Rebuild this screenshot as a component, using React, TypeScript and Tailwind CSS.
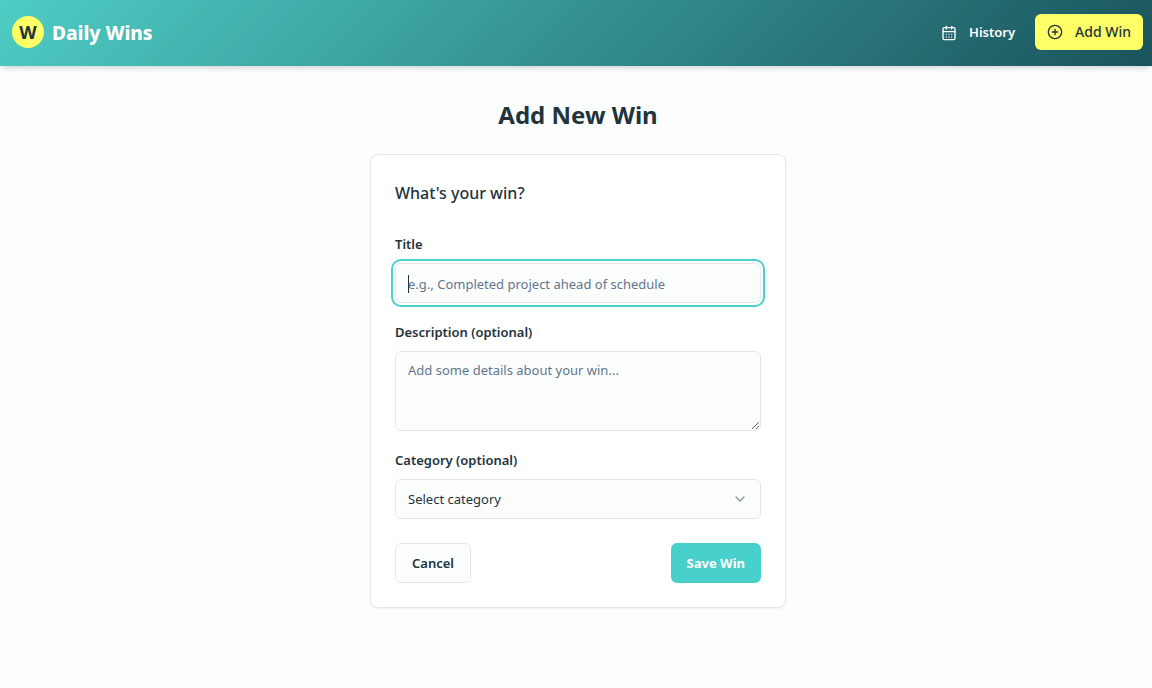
import { CalendarDays, ChevronDown, CirclePlus } from "lucide-react";

const label = "pt-0.5 text-[13px] leading-[22px] font-semibold";
const field =
  "w-full rounded-md border border-[#e2e8f0] bg-[#fcfefe] px-3 text-[13px] leading-5 placeholder:text-[#64748b] placeholder:opacity-100 outline-none";

export default function App() {
  return (
    <div className="min-h-screen overflow-x-hidden bg-[#fcfefe] font-['Noto_Sans','Open_Sans',sans-serif] text-[#22333b]">
      <header className="flex items-center justify-between bg-[linear-gradient(135deg,#4ecdc4,#1a535c)] pt-3.5 pr-[9px] pb-4 pl-3 shadow-md">
        <a href="#home" className="flex items-center gap-2">
          <span className="flex size-8 items-center justify-center rounded-full bg-[#ffff66] text-lg font-bold">W</span>
          <span className="pt-0.5 text-[19px] leading-7 font-extrabold text-white">Daily Wins</span>
        </a>
        <nav className="flex items-center gap-2">
          <button type="button" className="flex h-9 items-center gap-3 rounded-md px-3 pt-0.5 text-[13px] font-semibold text-white">
            <CalendarDays size={16} />
            History
          </button>
          <button type="button" className="flex h-9 items-center gap-3 rounded-md bg-[#ffff66] px-3 text-sm font-medium">
            <CirclePlus size={16} />
            Add Win
          </button>
        </nav>
      </header>
      <main className="mx-auto max-w-md pt-[33px] pr-3.5 pl-[18px]">
        <h1 className="mb-[23px] text-center text-2xl font-bold">Add New Win</h1>
        <section className="rounded-lg border border-[#e2e8f0] bg-white p-6 shadow-xs">
          <h2 className="mb-6 text-base leading-7 font-medium">What's your win?</h2>
          <form className="flex flex-col gap-4">
            <div className="flex flex-col gap-2">
              <label htmlFor="title" className={label}>Title</label>
              <div className="relative">
                <input
                  id="title"
                  autoFocus
                  placeholder="e.g., Completed project ahead of schedule"
                  className={`${field} block h-10 pt-0.5 caret-transparent ring-2 ring-[#48d1cc] ring-offset-2`}
                />
                <span aria-hidden="true" className="pointer-events-none absolute top-3 left-[13px] h-[18px] w-px bg-[#22333b]" />
              </div>
            </div>
            <div className="flex flex-col gap-2">
              <label htmlFor="description" className={label}>Description (optional)</label>
              <textarea
                id="description"
                placeholder="Add some details about your win..."
                className={`${field} block h-20 resize-y py-2`}
              />
            </div>
            <div className="flex flex-col gap-2">
              <label htmlFor="category" className={label}>Category (optional)</label>
              <div className="relative">
                <select id="category" className={`${field} block h-10 appearance-none`}>
                  <option>Select category</option>
                </select>
                <ChevronDown size={16} className="pointer-events-none absolute top-3 right-[13px] opacity-50" />
              </div>
            </div>
            <div className="flex justify-between pt-2">
              <button type="button" className="h-10 rounded-md border border-[#e2e8f0] bg-[#fcfefe] px-4 pt-0.5 text-[13px] font-semibold">
                Cancel
              </button>
              <button type="submit" className="h-10 rounded-md bg-[#48d1cc] px-4 pt-0.5 text-[13px] font-bold text-white">
                Save Win
              </button>
            </div>
          </form>
        </section>
      </main>
    </div>
  );
}
